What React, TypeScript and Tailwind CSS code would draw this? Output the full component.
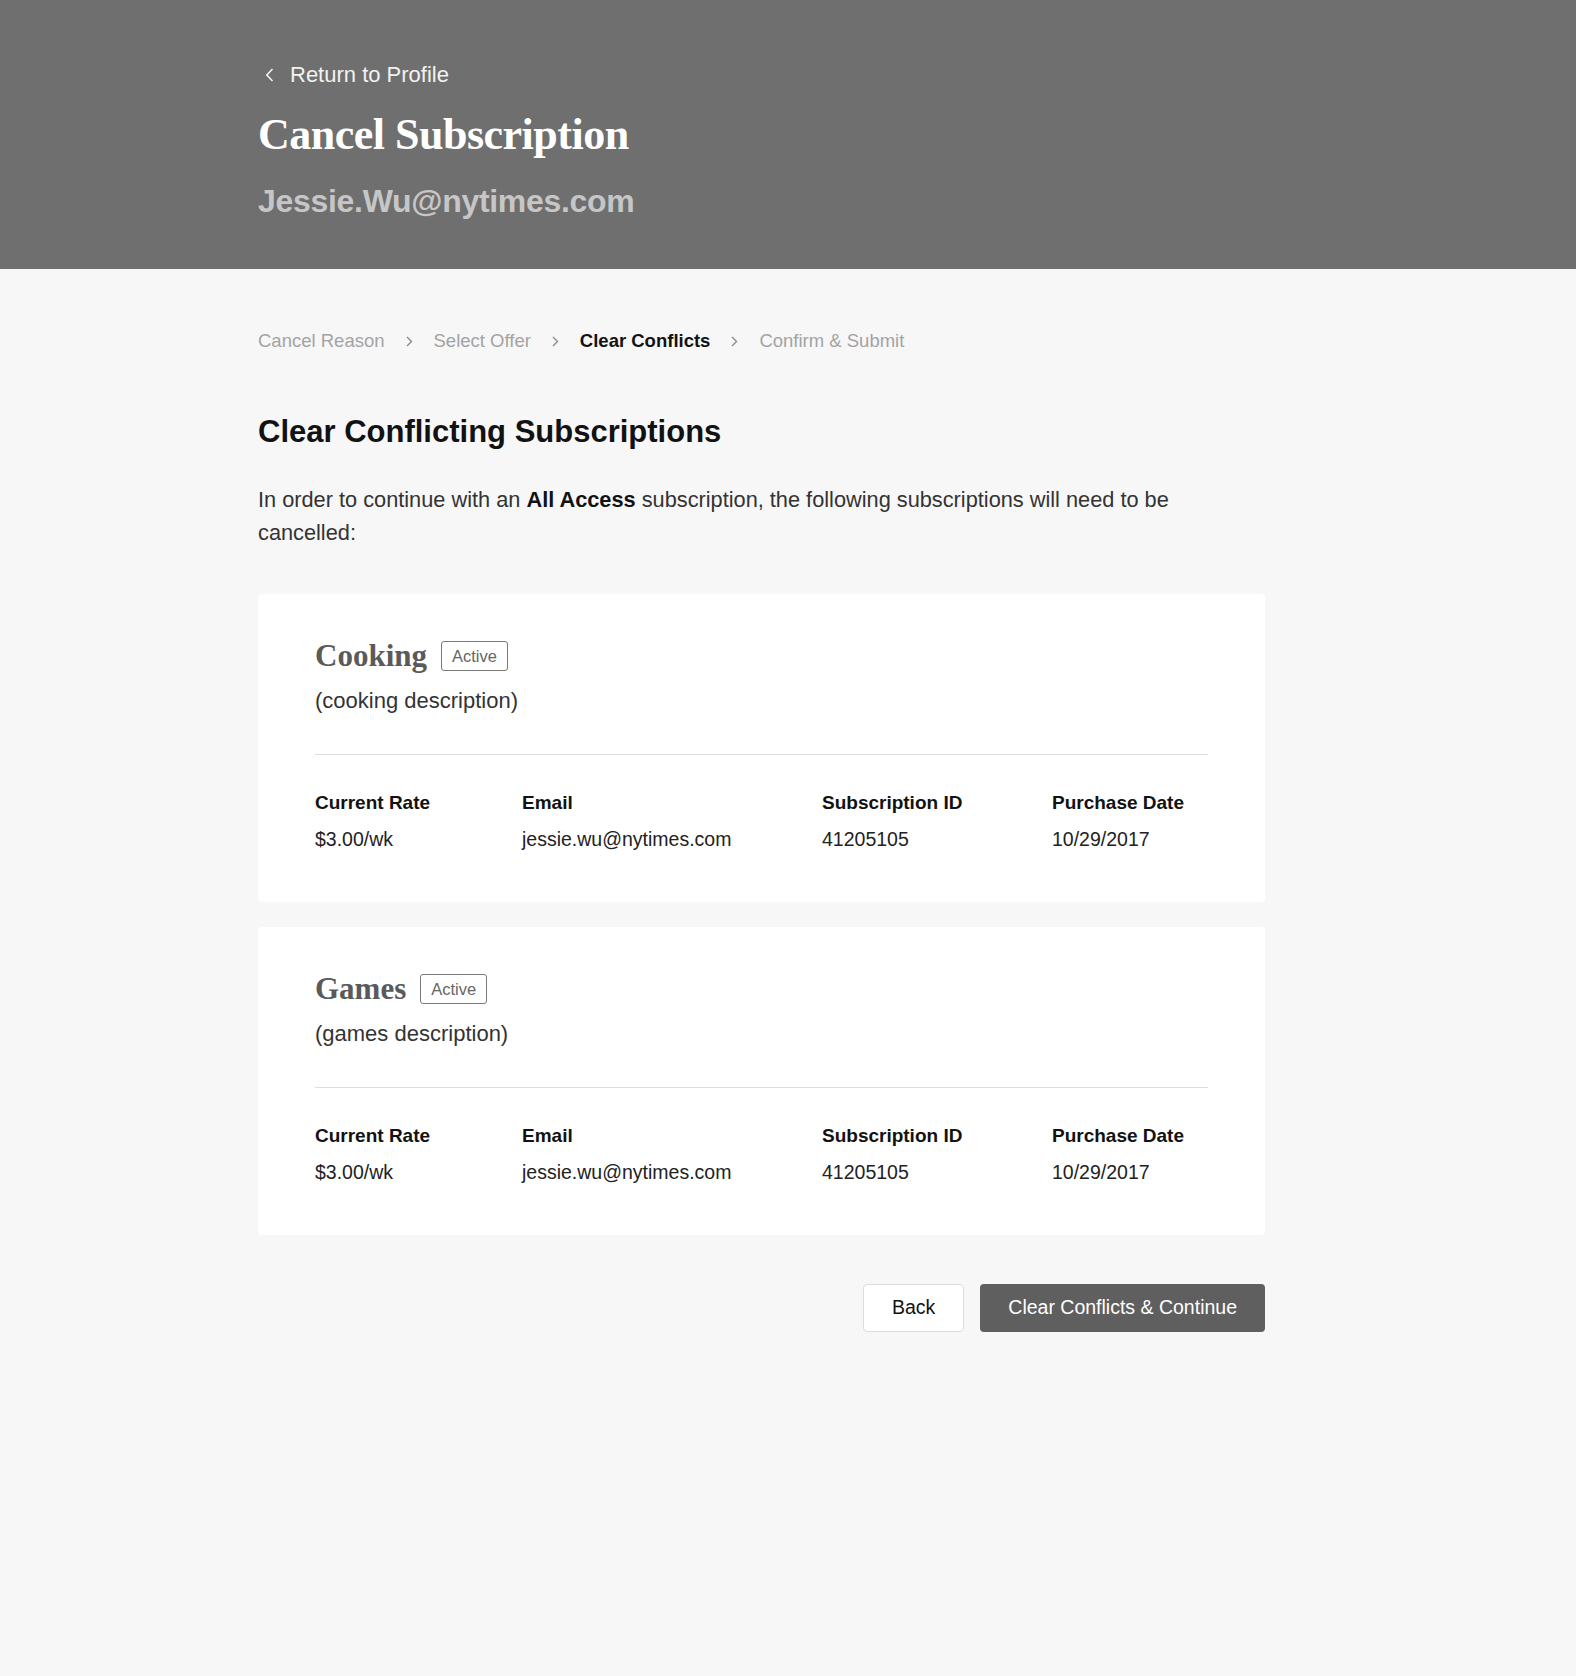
import React from "react";

type Sub = {
  name: string;
  description: string;
  rate: string;
  email: string;
  id: string;
  date: string;
};

const subs: Sub[] = [
  {
    name: "Cooking",
    description: "(cooking description)",
    rate: "$3.00/wk",
    email: "jessie.wu@nytimes.com",
    id: "41205105",
    date: "10/29/2017",
  },
  {
    name: "Games",
    description: "(games description)",
    rate: "$3.00/wk",
    email: "jessie.wu@nytimes.com",
    id: "41205105",
    date: "10/29/2017",
  },
];

const steps = ["Cancel Reason", "Select Offer", "Clear Conflicts", "Confirm & Submit"];

function Chevron({ className }: { className?: string }) {
  return (
    <svg width="7" height="11" viewBox="0 0 7 11" fill="none" className={className}>
      <path d="M1 1 L5.5 5.5 L1 10" stroke="currentColor" strokeWidth="1.4" />
    </svg>
  );
}

function Detail({ label, value }: { label: string; value: string }) {
  return (
    <div>
      <div className="text-[19px] leading-[26px] font-bold text-[#121212]">{label}</div>
      <div className="mt-[10px] text-[19.5px] leading-[26px] text-[#222]">{value}</div>
    </div>
  );
}

function SubCard({ sub }: { sub: Sub }) {
  return (
    <div className="bg-white rounded-[4px] px-[57px] pt-[42px] pb-[50px]">
      <div className="flex items-center h-[40px]">
        <span className="font-['Liberation_Serif',serif] font-bold text-[31px] leading-[40px] text-[#5a5a5a]">
          {sub.name}
        </span>
        <span className="ml-[14px] flex items-center h-[30px] px-[10px] border-[1.5px] border-[#7a7a7a] rounded-[3px] text-[16.5px] text-[#666]">
          Active
        </span>
      </div>
      <p className="mt-[10px] text-[22px] leading-[30px] text-[#333]">{sub.description}</p>
      <div className="mt-[38px] h-px bg-[#dedede]" />
      <div className="mt-[35px] grid grid-cols-[207px_300px_230px_1fr]">
        <Detail label="Current Rate" value={sub.rate} />
        <Detail label="Email" value={sub.email} />
        <Detail label="Subscription ID" value={sub.id} />
        <Detail label="Purchase Date" value={sub.date} />
      </div>
    </div>
  );
}

export default function App() {
  return (
    <div className="min-h-screen bg-[#f7f7f7] font-['Liberation_Sans',Arial,sans-serif]">
      <header className="bg-[#6f6f6f]">
        <div className="ml-[258px] w-[1007px] pt-[61px] pb-[48px]">
          <a href="#" className="flex items-center gap-[16px] pl-[7px] text-[22px] leading-[28px] text-[#f2f2f2]">
            <svg width="9" height="14" viewBox="0 0 9 14" fill="none">
              <path d="M7.5 1 L1.8 7 L7.5 13" stroke="currentColor" strokeWidth="1.6" />
            </svg>
            Return to Profile
          </a>
          <h1 className="mt-[20px] font-['Liberation_Serif',serif] font-bold text-[44px] leading-[52px] tracking-[-0.5px] text-white">
            Cancel Subscription
          </h1>
          <div className="mt-[20px] font-bold text-[32px] leading-[40px] tracking-[-0.3px] text-[#c6c6c6]">
            Jessie.Wu@nytimes.com
          </div>
        </div>
      </header>

      <main className="ml-[258px] w-[1007px] pt-[59px] pb-[80px]">
        <nav className="flex items-center text-[18.5px] leading-[26px]">
          {steps.map((s, i) => (
            <React.Fragment key={s}>
              {i > 0 && <Chevron className="mx-[21px] text-[#8a8a8a]" />}
              <span className={s === "Clear Conflicts" ? "font-bold text-[#121212]" : "text-[#a3a3a3]"}>{s}</span>
            </React.Fragment>
          ))}
        </nav>

        <h2 className="mt-[59px] text-[31px] leading-[38px] font-bold text-[#121212]">
          Clear Conflicting Subscriptions
        </h2>
        <p className="mt-[32px] text-[21.75px] leading-[33px] text-[#333]">
          In order to continue with an <b className="text-[#121212]">All Access</b> subscription, the following
          subscriptions will need to be cancelled:
        </p>

        <div className="mt-[45px] flex flex-col gap-[25px]">
          {subs.map((s) => (
            <SubCard key={s.name} sub={s} />
          ))}
        </div>

        <div className="mt-[49px] flex justify-end gap-[16px]">
          <button className="h-[48px] px-[28px] bg-white border-[1.5px] border-[#dcdcdc] rounded-[4px] text-[19.5px] text-[#121212]">
            Back
          </button>
          <button className="h-[48px] px-[28px] bg-[#5f5f5f] rounded-[4px] text-[19.5px] text-white">
            Clear Conflicts &amp; Continue
          </button>
        </div>
      </main>
    </div>
  );
}
